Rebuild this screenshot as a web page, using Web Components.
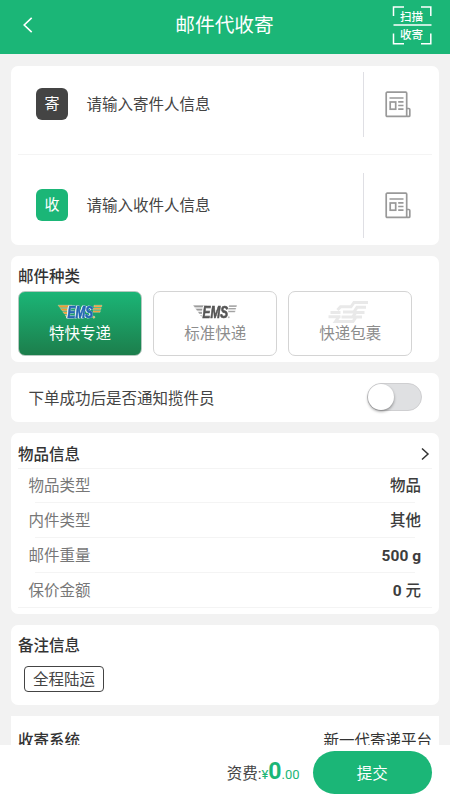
<!DOCTYPE html>
<html lang="zh-CN">
<head>
<meta charset="utf-8">
<title>邮件代收寄</title>
<style>
html,body{margin:0;height:800px;overflow:hidden;background:#f2f2f2;font-family:Roboto,"Noto Sans CJK SC",sans-serif;font-size:15.5px;color:#444}
</style>
</head>
<body>
<mail-app></mail-app>
<script>
const define = (name, html) => customElements.define(name, class extends HTMLElement {
  connectedCallback() {
    if (this.shadowRoot) return;
    const t = document.createElement('template');
    t.innerHTML = typeof html === 'function' ? html(this) : html;
    this.attachShadow({mode: 'open'}).appendChild(t.content.cloneNode(true));
  }
});

define('scan-button', `<style>
:host{display:block;position:relative;width:40px;height:40px;color:#fff;font-size:11.5px;font-weight:500;line-height:18px;text-align:center}
svg{position:absolute;inset:0}
div{height:20px;padding-top:2px;box-sizing:border-box}
div+div{padding-top:0}
</style><svg width="40" height="40" fill="none" stroke="#fff" stroke-width="1.5"><path d="M1.5 10V.9H12M29 .9h9.8V10M1.5 27.5v10.3H12M29 37.8h9.8V27.5M1.5 19h38"/></svg><div>扫描</div><div>收寄</div>`);

define('app-header', `<style>
:host{display:grid;grid-template-columns:76px 1fr 76px;align-items:center;height:54px;background:#1bb677;color:#fff;flex:none;box-sizing:border-box;padding-bottom:4px}
h1{margin:1px 0 0;padding-right:1px;font-weight:400;font-size:19.7px;line-height:28px;text-align:center}
.back{margin:-1px 0 0 22px;display:block}
scan-button{margin:1px 0 0 17.5px}
</style><svg class="back" width="12" height="18" fill="none" stroke="#fff" stroke-width="1.6"><path d="M9.7 1.8 2.2 9l7.5 7.2"/></svg><h1><slot></slot></h1><scan-button></scan-button>`);

define('app-card', `<style>
:host{display:block;background:#fff;border-radius:7px;box-sizing:border-box;flex:none}
</style><slot></slot>`);

define('address-icon', `<style>:host{display:block;width:26px;height:27px}</style>
<svg width="26" height="27" fill="none" stroke="#999" stroke-width="1.7"><rect x="1.2" y="1.2" width="20.5" height="24.2" rx="1"/><path d="M21.6 17.5h2.2q1 0 1 1v5.9q0 1-1 1h-2.2M4.5 7h14M13.2 10.8h5.3M13.2 14.5h5.3M13.2 18.2h5.3"/><rect x="5.2" y="11" width="5.5" height="7.2"/></svg>`);

define('contact-row', e => `<style>
:host{display:flex;align-items:center;height:65px}
.tag{width:32.5px;height:32.5px;border-radius:6px;background:${e.getAttribute('tone')};color:#fff;display:grid;place-items:center;font-size:15px;line-height:20px;margin:0 18.3px 0 24.7px}
.text{flex:1;line-height:22px;padding-top:1px}
.side{width:76px;height:65px;box-sizing:border-box;border-left:1px solid #dfdfe4;padding:19px 0 0 20.5px}
</style><div class="tag">${e.getAttribute('tag')}</div><div class="text"><slot></slot></div><div class="side"><address-icon></address-icon></div>`);

const emsIcon = (wing, text, halo) => `<svg width="46" height="18" viewBox="0 0 46 18"><g fill="${wing}" stroke="${halo}" stroke-width=".3"><path d="M1 2.2h14l-.6 2.2H2.8zM3.3 5.5h10.8l-.6 2.2H5.1zM5.7 8.8h7.6l-.6 2.1H7.4zM8 12h4.5l-.9 3.2h-1z"/><path d="M37 2.2h8l-.5 1.7h-7.7zM36.5 4.9h7.7l-.5 1.7H36zM36 7.7h7.5L43 9.3h-6.7z"/></g><text style="filter:drop-shadow(.7px 0 0 ${halo}) drop-shadow(-.7px 0 0 ${halo})" x="10.6" y="15" textLength="25.5" lengthAdjust="spacingAndGlyphs" font-family="Liberation Sans" font-style="italic" font-weight="700" font-size="17" fill="${text}" stroke="${text}" stroke-width=".7">EMS</text><circle cx="36.8" cy="14.2" r="1" fill="${wing}" stroke="${halo}" stroke-width=".5"/></svg>`;
const postIcon = `<svg width="42" height="24" fill="none" stroke="#e9e9e9" stroke-width="3"><path d="M40 2.5H26l-3 4.3H12.5L9.5 10M38 7.3h-9l-3.2 4.7H15M2.5 12.4h10M0.5 16.7h12M36.5 12.4H28l-3.6 4.7H13.5M34 16.9h-6L25 21.6H7.5L11 16.5"/></svg>`;
define('mail-kind', e => {
  const kind = e.getAttribute('kind'), on = kind === 'express';
  const icon = kind === 'parcel' ? postIcon : on ? emsIcon('#f39a2d', '#2467b2', '#e9f3f2') : emsIcon('#999', '#555', '#fff');
  return `<style>
:host{display:flex;flex-direction:column;align-items:center;box-sizing:border-box;width:124px;height:65px;border:1.5px solid ${on ? '#b4c9bf' : '#d4d4d4'};border-radius:7px;background:${on ? 'linear-gradient(#1bb677,#1c7d4b) border-box' : '#fff'};color:${on ? '#fff' : '#8d8d8d'}}
.pic{height:30px;display:flex;align-items:${kind === 'parcel' ? 'flex-end' : 'center'};padding-top:10px;box-sizing:border-box}
.pic svg{flex:none;overflow:visible;${kind === 'parcel' ? 'margin:0 3px -2px 0' : ''}}
.label{line-height:22px;margin-top:1.5px}
</style><div class="pic">${icon}</div><div class="label"><slot></slot></div>`;
});

define('toggle-switch', `<style>
:host{display:block;box-sizing:border-box;width:55px;height:28px;border:1px solid #cfcfd1;border-radius:14px;background:#dfe0e2}
i{display:block;width:26px;height:26px;border-radius:50%;background:#fff;box-shadow:0 1.5px 3px #0006}
</style><i></i>`);

define('section-title', `<style>
:host{display:flex;justify-content:space-between;align-items:center;font-weight:500;color:#333;line-height:22px}
</style><slot></slot>`);

define('info-row', e => `<style>
:host{display:flex;align-items:center;justify-content:space-between;height:34.8px;position:relative;padding:1px 11px 0 10.5px;box-sizing:border-box;color:#777}
span,b{line-height:22px}
b{font-weight:500;color:#3d3d3d}
::slotted(strong){font-weight:700}
:host::after{content:"";position:absolute;bottom:0;height:1px;background:#f4f4f4;left:17px;right:17px}
:host([last])::after{left:0;right:0}
</style><span>${e.getAttribute('label')}</span><b><slot></slot></b>`);

define('note-chip', `<style>
:host{display:inline-grid;place-items:center;box-sizing:border-box;width:80px;height:26px;border:1px solid #444;border-radius:4px;line-height:20px;padding-top:2px}
</style><slot></slot>`);

define('pay-bar', `<style>
:host{display:flex;align-items:center;justify-content:flex-end;position:absolute;left:0;right:0;bottom:0;height:55px;background:#fff;padding-right:18px;box-sizing:border-box}
.fee{display:flex;align-items:baseline;line-height:26px;margin-right:13px;padding-top:2px}
.g{color:#1bb677;font-size:13px}
.g b{font-weight:700;font-size:23px}
button{width:119.5px;height:43px;border:0;border-radius:22px;background:#1bb677;color:#fff;font:inherit;padding:0 0 2px}
</style><div class="fee"><span>资费:</span><span class="g">¥<b>0</b>.00</span></div><button>提交</button>`);

define('mail-app', `<style>
:host{display:block;position:relative;height:800px;overflow:hidden}
main{display:flex;flex-direction:column;padding:11.5px 11px 0 11px;gap:11px}
.contacts{height:179px;padding:6.2px 0 0}
.rule{height:1px;background:#f4f4f4;margin:17px 7px 18px}
.kinds{height:106.5px;padding:10px 7px 0}
.list{display:flex;gap:11.2px;margin-top:3px}
.notify{height:48.5px;display:flex;align-items:center;justify-content:space-between;padding:0 17.5px}
.items{height:181px;padding:10.5px 7px 0}
.items section-title{height:25.5px;padding-bottom:1.5px;box-sizing:border-box;border-bottom:1px solid #f4f4f4}
.items svg{margin:-2px 2px 0 0}
.notes{height:80px;padding:10.5px 7px 0}
note-chip{margin:8.5px 0 0 6px}
.system{height:90px;border-radius:0;padding:14px 7px 0}
.system span{font-weight:400;color:#333}
</style>
<app-header>邮件代收寄</app-header>
<main>
<app-card class="contacts"><contact-row tag="寄" tone="#444">请输入寄件人信息</contact-row><div class="rule"></div><contact-row tag="收" tone="#1bb677">请输入收件人信息</contact-row></app-card>
<app-card class="kinds"><section-title>邮件种类</section-title><div class="list"><mail-kind kind="express">特快专递</mail-kind><mail-kind kind="standard">标准快递</mail-kind><mail-kind kind="parcel">快递包裹</mail-kind></div></app-card>
<app-card class="notify"><span>下单成功后是否通知揽件员</span><toggle-switch></toggle-switch></app-card>
<app-card class="items"><section-title>物品信息<svg width="10" height="14" fill="none" stroke="#333" stroke-width="1.5"><path d="m2 1.5 6 5.5-6 5.5"/></svg></section-title>
<info-row label="物品类型">物品</info-row><info-row label="内件类型">其他</info-row><info-row label="邮件重量"><strong>500 g</strong></info-row><info-row label="保价金额" last><strong>0</strong> 元</info-row></app-card>
<app-card class="notes"><section-title>备注信息</section-title><note-chip>全程陆运</note-chip></app-card>
<app-card class="system"><section-title>收寄系统<span>新一代寄递平台</span></section-title></app-card>
</main>
<pay-bar></pay-bar>`);
</script>
</body>
</html>
